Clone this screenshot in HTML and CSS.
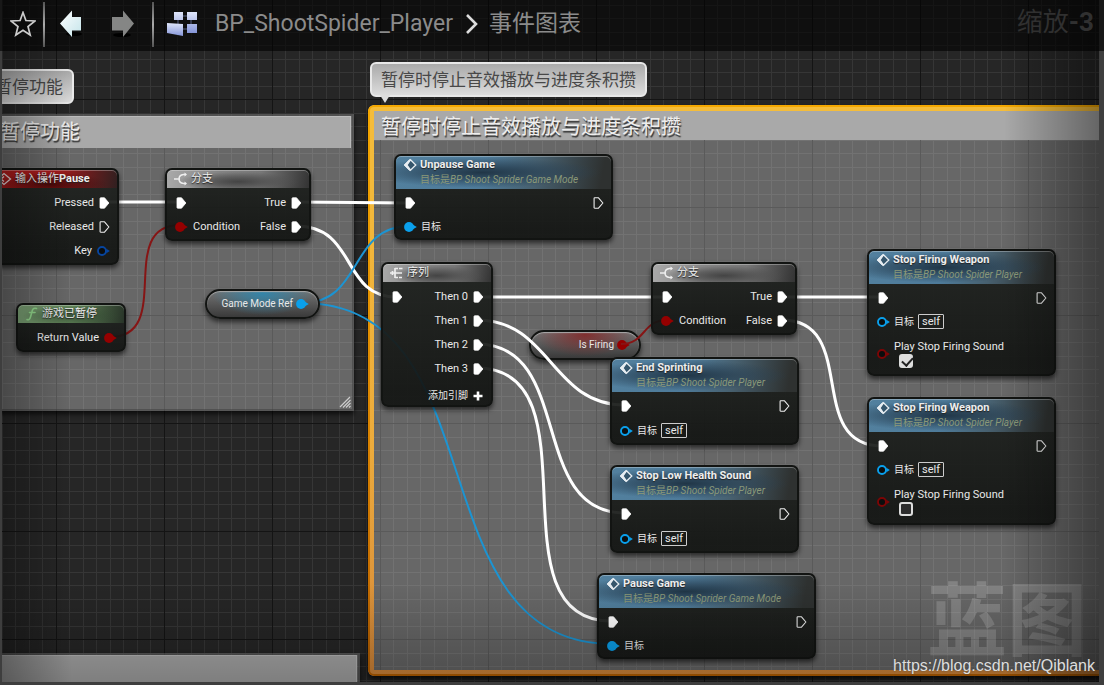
FILE: index.html
```html
<!DOCTYPE html>
<html lang="zh-CN">
<head>
<meta charset="utf-8">
<meta name="viewport" content="width=device-width, initial-scale=1">
<title>BP_ShootSpider_Player</title>
<link rel="stylesheet" href="styles.css">
</head>
<body>
<svg class="defs" aria-hidden="true">
  <defs>
    <pattern id="grid" x="56" y="99" width="108" height="108" patternUnits="userSpaceOnUse">
      <path class="grid-minor" d="M13.5 0V108M27.5 0V108M40.5 0V108M54.5 0V108M67.5 0V108M81.5 0V108M94.5 0V108M0 14.5H108M0 27.5H108M0 41.5H108M0 54.5H108M0 68.5H108M0 81.5H108M0 95.5H108"/>
      <path class="grid-major" d="M.5 0V108M0 .5H108"/>
    </pattern>
    <linearGradient id="ice" x1="0" y1="0" x2="1" y2="1"><stop offset="0" stop-color="#fff"/><stop offset="1" stop-color="#c4e4ea"/></linearGradient>
    <linearGradient id="tile" x1="0" y1="0" x2="0" y2="1"><stop offset="0" stop-color="#dfe6fa"/><stop offset="1" stop-color="#8595d8"/></linearGradient>
    <symbol id="exec-on" viewBox="0 0 10 12"><path d="M1.2.8H5L9.4 6 5 11.2H1.2Q.5 11.2.5 10.4V1.6Q.5.8 1.2.8Z" fill="#fff" stroke="#fff" stroke-width=".8" stroke-linejoin="round"/></symbol>
    <symbol id="exec-off" viewBox="0 0 10 12"><path d="M1.2.8H5L9.4 6 5 11.2H1.2Q.6 11.2.6 10.4V1.6Q.6.8 1.2.8Z" fill="none" stroke="#eee" stroke-width="1.1" stroke-linejoin="round"/></symbol>
    <symbol id="dot-on" viewBox="0 0 13 10"><circle cx="5" cy="5" r="4.9" fill="currentColor"/><path d="M9 2.8L12.8 5 9 7.2Z" fill="currentColor"/></symbol>
    <symbol id="dot-off" viewBox="0 0 13 10"><circle cx="5" cy="5" r="4" fill="#0b0d0d" stroke="currentColor" stroke-width="1.9"/><path d="M9.4 2.8L12.8 5 9.4 7.2Z" fill="currentColor"/></symbol>
    <symbol id="diamond" viewBox="0 0 14 14"><path d="M6.5 1.500L1 7l5.500 5.500 1-1.500L4.500 7l3-4Z" fill="#e8eef2" stroke="#e8eef2" stroke-width=".8"/><path d="M7.500 1.800L12.800 7 7.500 12.200 4 7Z" fill="#35566c" stroke="#e8eef2" stroke-width="1.300"/></symbol>
    <symbol id="event" viewBox="0 0 14 14"><path d="M2 5L6 1.500 12.500 7 6 12.500 2 9M6 4.500L3 7l3 2.500" fill="none" stroke="#e5dada" stroke-width="1.300"/></symbol>
    <symbol id="branch" viewBox="0 0 14 14"><path d="M0 7H6M12 2.500H9.500Q5 3 5 7T9.500 11.500H12" fill="none" stroke="#eee" stroke-width="1.500"/><path d="M10.500.5L13 2.500 10.500 4.500M10.500 9.500L13 11.500 10.500 13.500" fill="#eee"/></symbol>
    <symbol id="sequence" viewBox="0 0 14 14"><path d="M0 7H12M5 2V12M5 2.500H8M5 11.500H8M9 2.500H12.500M9 11.500H12M2.500 5V9" fill="none" stroke="#eee" stroke-width="1.700"/></symbol>
    <symbol id="func" viewBox="0 0 12 14"><path d="M1 12.500Q3.500 13.500 4.500 10L6.300 3.500Q7.200.5 10.500 1.500M3.500 5.500H9" fill="none" stroke="#93d98d" stroke-width="1.600" stroke-linecap="round"/></symbol>
    <symbol id="plus" viewBox="0 0 10 10"><path d="M5 .5V9.500M.5 5H9.500" stroke="#fff" stroke-width="2.600"/></symbol>
  </defs>
</svg>

<div class="editor">
  <header class="toolbar">
    <button class="tool star" type="button" aria-label="收藏"><svg viewBox="0 0 26 26"><path d="M13 1.500L15.900 9.500 25 10 18 15.500 20.200 24 13 19.300 5.800 24 8 15.500 1 10 10.100 9.500Z" fill="none" stroke="#ccc" stroke-width="1.700"/></svg></button>
    <span class="divider"></span>
    <button class="tool back" type="button" aria-label="后退"><svg viewBox="0 0 26 30"><ellipse cx="16" cy="25" rx="8" ry="2" fill="#000"/><path d="M2 14.500L14 1.500V8H23V21.500H14V28Z" fill="url(#ice)"/></svg></button>
    <button class="tool forward" type="button" aria-label="前进"><svg viewBox="0 0 26 30"><ellipse cx="12" cy="26" rx="9" ry="2" fill="#000"/><path d="M24 14.500L13 1.500V8H2V21.500H13V28Z" fill="#858685"/></svg></button>
    <span class="divider"></span>
    <nav class="crumbs">
      <svg class="graph-icon" viewBox="0 0 32 26"><path d="M12 5H24M12 5V20M25 5V18M14 18H24" stroke="#566083" fill="none"/><path d="M8 1H17V9H8ZM21 1H31V9H21ZM21 13H31V22H21Z" fill="url(#tile)"/><path d="M1 12L17 13V25L1 22Z" fill="url(#tile)"/></svg>
      <a class="crumb" href="#">BP_ShootSpider_Player</a>
      <svg class="chevron" viewBox="0 0 14 20"><path d="M2 1L11 10 2 19" fill="none" stroke="#ddd" stroke-width="2.600"/></svg>
      <span class="crumb">事件图表</span>
    </nav>
    <span class="zoom-level">缩放<b>-3</b></span>
  </header>

  <main class="canvas">
    <svg class="layer" aria-hidden="true"><rect width="100%" height="100%" fill="url(#grid)"/></svg>

    <section class="comment pause-comment"><h2 class="comment-title">暂停功能</h2>
      <svg class="grip" viewBox="0 0 12 12"><path d="M1 11L11 1M4 11.500L11.500 4M7 11.500L11.500 7M10 11.500L11.500 10" stroke="#ccc" stroke-width="1.200"/></svg>
    </section>
    <section class="comment lower-comment"><h2 class="comment-title"></h2></section>
    <section class="comment selected stop-comment"><h2 class="comment-title">暂停时停止音效播放与进度条积攒</h2></section>
    <div class="bubble pause-bubble">暂停功能</div>
    <div class="bubble tailed stop-bubble">暂停时停止音效播放与进度条积攒</div>
    <div class="graph-mark">蓝图</div>

    <article class="node pill red is-firing"><span class="pin out">Is Firing<svg class="dot c-red"><use href="#dot-on"/></svg></span></article>

    <svg class="layer wires" aria-hidden="true">
      <path d="M104 202H180M296 202L410 203M477 297H666M782 297H882"/>
      <path d="M296 226C358 226 340 297 397 297"/>
      <path d="M477 320C551 320 551 405 625 405"/>
      <path d="M477 344C575 344 527 513 625 513"/>
      <path d="M477 368C600 368 488 621 611 621"/>
      <path d="M782 320C860 320 804 446 882 446"/>
      <path class="data c-blue" d="M302 303C364 303 348 226 410 226M302 303C500 303 414 644 612 644"/>
      <path class="data c-wire-red" d="M110 337C175 337 115 225 180 225M621 344C646 344 642 320 667 320"/>
    </svg>

    <article class="node event input-pause">
      <header class="head"><svg class="glyph"><use href="#event"/></svg><h3>输入操作<b>Pause</b></h3></header>
      <div class="pins">
        <span class="pin out">Pressed<svg class="exec"><use href="#exec-on"/></svg></span>
        <span class="pin out">Released<svg class="exec"><use href="#exec-off"/></svg></span>
        <span class="pin out">Key<svg class="dot c-navy"><use href="#dot-off"/></svg></span>
      </div>
    </article>

    <article class="node flow branch-a">
      <header class="head"><svg class="glyph"><use href="#branch"/></svg><h3>分支</h3></header>
      <div class="pins two">
        <span class="pin"><svg class="exec"><use href="#exec-on"/></svg></span><span class="pin out">True<svg class="exec"><use href="#exec-on"/></svg></span>
        <span class="pin"><svg class="dot c-red"><use href="#dot-on"/></svg>Condition</span><span class="pin out">False<svg class="exec"><use href="#exec-on"/></svg></span>
      </div>
    </article>

    <article class="node pure is-paused">
      <header class="head"><svg class="glyph"><use href="#func"/></svg><h3>游戏已暂停</h3></header>
      <div class="pins"><span class="pin out">Return Value<svg class="dot c-red"><use href="#dot-on"/></svg></span></div>
    </article>

    <article class="node pill blue mode-ref"><span class="pin out">Game Mode Ref<svg class="dot c-blue"><use href="#dot-on"/></svg></span></article>

    <article class="node call unpause">
      <header class="head"><svg class="glyph"><use href="#diamond"/></svg><h3><b>Unpause Game</b></h3><p>目标是<i>BP Shoot Sprider Game Mode</i></p></header>
      <div class="pins two">
        <span class="pin"><svg class="exec"><use href="#exec-on"/></svg></span><span class="pin out"><svg class="exec"><use href="#exec-off"/></svg></span>
        <span class="pin"><svg class="dot c-blue"><use href="#dot-on"/></svg>目标</span>
      </div>
    </article>

    <article class="node flow sequence">
      <header class="head"><svg class="glyph"><use href="#sequence"/></svg><h3>序列</h3></header>
      <div class="pins two">
        <span class="pin"><svg class="exec"><use href="#exec-on"/></svg></span><span class="pin out">Then 0<svg class="exec"><use href="#exec-on"/></svg></span>
        <span class="pin out wide">Then 1<svg class="exec"><use href="#exec-on"/></svg></span>
        <span class="pin out wide">Then 2<svg class="exec"><use href="#exec-on"/></svg></span>
        <span class="pin out wide">Then 3<svg class="exec"><use href="#exec-on"/></svg></span>
        <button class="add-pin wide" type="button">添加引脚<svg><use href="#plus"/></svg></button>
      </div>
    </article>

    <article class="node flow branch-b">
      <header class="head"><svg class="glyph"><use href="#branch"/></svg><h3>分支</h3></header>
      <div class="pins two">
        <span class="pin"><svg class="exec"><use href="#exec-on"/></svg></span><span class="pin out">True<svg class="exec"><use href="#exec-on"/></svg></span>
        <span class="pin"><svg class="dot c-red"><use href="#dot-on"/></svg>Condition</span><span class="pin out">False<svg class="exec"><use href="#exec-on"/></svg></span>
      </div>
    </article>

    <article class="node call end-sprint">
      <header class="head"><svg class="glyph"><use href="#diamond"/></svg><h3><b>End Sprinting</b></h3><p>目标是<i>BP Shoot Spider Player</i></p></header>
      <div class="pins two roomy">
        <span class="pin"><svg class="exec"><use href="#exec-on"/></svg></span><span class="pin out"><svg class="exec"><use href="#exec-off"/></svg></span>
        <span class="pin"><svg class="dot c-blue"><use href="#dot-off"/></svg>目标<span class="self">self</span></span>
      </div>
    </article>

    <article class="node call stop-low">
      <header class="head"><svg class="glyph"><use href="#diamond"/></svg><h3><b>Stop Low Health Sound</b></h3><p>目标是<i>BP Shoot Spider Player</i></p></header>
      <div class="pins two roomy">
        <span class="pin"><svg class="exec"><use href="#exec-on"/></svg></span><span class="pin out"><svg class="exec"><use href="#exec-off"/></svg></span>
        <span class="pin"><svg class="dot c-blue"><use href="#dot-off"/></svg>目标<span class="self">self</span></span>
      </div>
    </article>

    <article class="node call pause-game">
      <header class="head"><svg class="glyph"><use href="#diamond"/></svg><h3><b>Pause Game</b></h3><p>目标是<i>BP Shoot Sprider Game Mode</i></p></header>
      <div class="pins two">
        <span class="pin"><svg class="exec"><use href="#exec-on"/></svg></span><span class="pin out"><svg class="exec"><use href="#exec-off"/></svg></span>
        <span class="pin"><svg class="dot c-blue"><use href="#dot-on"/></svg>目标</span>
      </div>
    </article>

    <article class="node call stop-fire-a">
      <header class="head"><svg class="glyph"><use href="#diamond"/></svg><h3><b>Stop Firing Weapon</b></h3><p>目标是<i>BP Shoot Spider Player</i></p></header>
      <div class="pins two">
        <span class="pin"><svg class="exec"><use href="#exec-on"/></svg></span><span class="pin out"><svg class="exec"><use href="#exec-off"/></svg></span>
        <span class="pin wide"><svg class="dot c-blue"><use href="#dot-off"/></svg>目标<span class="self">self</span></span>
        <span class="pin wide tall"><svg class="dot c-dark-red"><use href="#dot-off"/></svg><label class="option">Play Stop Firing Sound<input type="checkbox" checked></label></span>
      </div>
    </article>

    <article class="node call stop-fire-b">
      <header class="head"><svg class="glyph"><use href="#diamond"/></svg><h3><b>Stop Firing Weapon</b></h3><p>目标是<i>BP Shoot Spider Player</i></p></header>
      <div class="pins two">
        <span class="pin"><svg class="exec"><use href="#exec-on"/></svg></span><span class="pin out"><svg class="exec"><use href="#exec-off"/></svg></span>
        <span class="pin wide"><svg class="dot c-blue"><use href="#dot-off"/></svg>目标<span class="self">self</span></span>
        <span class="pin wide tall"><svg class="dot c-dark-red"><use href="#dot-off"/></svg><label class="option">Play Stop Firing Sound<input type="checkbox"></label></span>
      </div>
    </article>

    <div class="shade"></div>
  </main>
  <div class="credit">https://blog.csdn.net/Qiblank</div>
</div>
</body>
</html>
```
FILE: styles.css
```css
* { box-sizing: border-box; }
body {
  margin: 0;
  background: #1c1c1c;
  color: #e6e6e6;
  font: 11px/14px Roboto, "Noto Sans CJK SC", sans-serif;
}
h2, h3, p { margin: 0; font-weight: 400; }
button { border: 0; padding: 0; background: none; color: inherit; font: inherit; }
svg { display: block; flex: none; }
.defs { position: absolute; width: 0; height: 0; }
.grid-minor { stroke: #363636; fill: none; }
.grid-major { stroke: #141414; fill: none; }

.editor { position: relative; min-height: 100vh; overflow: hidden; }

/* Toolbar */
.toolbar {
  position: relative;
  z-index: 2;
  display: flex;
  align-items: center;
  height: 51px;
  padding: 0 10px 3px;
  background: rgba(0, 0, 0, .6);
}
.tool svg { width: 26px; height: 30px; }
.star svg { height: 26px; }
.divider { width: 2px; height: 45px; margin: 0 13px 0 7px; background: linear-gradient(#555, #aaa, #555); }
.forward { margin: 0 16px 0 26px; }
.forward + .divider { margin: 0 12px 0 0; }
.crumbs { display: flex; align-items: center; }
.graph-icon { width: 32px; height: 26px; margin-right: 17px; }
.crumb { color: #8b8b8b; font-size: 23px; line-height: 32px; text-decoration: none; }
.chevron { width: 14px; height: 20px; margin: 0 10px 0 12px; }
.zoom-level { margin: 0 0 4px auto; color: #303030; font-size: 26px; line-height: 32px; }

/* Graph canvas */
.canvas {
  position: absolute;
  inset: 0;
  overflow: hidden;
  background: #262626;
}
.layer { position: absolute; inset: 0; width: 100%; height: 100%; }
.wires { fill: none; stroke: #fff; stroke-width: 3; }
.wires .data { stroke: currentColor; stroke-width: 2; }
.c-red { color: #950000; }
.c-dark-red { color: #7c0505; }
.c-wire-red { color: #861515; }
.c-blue { color: #0aa0ec; }
.wires .c-blue { color: #1c94d2; }
.c-navy { color: #07459f; }
.shade {
  position: absolute;
  inset: 0 5px 3px 2px;
  pointer-events: none;
  background:
    linear-gradient(to right, rgba(0, 0, 0, .3), transparent 70px),
    linear-gradient(to left, rgba(0, 0, 0, .4), transparent 95px),
    linear-gradient(to top, rgba(0, 0, 0, .25), transparent 100px);
  outline: 5px solid #3e3e3e;
}

/* Comment boxes */
.comment {
  position: absolute;
  padding: 2px 3px 3px;
  background: rgba(255, 255, 255, .3);
  box-shadow: inset 0 0 0 2px rgba(60, 60, 60, .5), 0 3px 5px rgba(0, 0, 0, .7);
}
.comment-title {
  min-height: 31px;
  padding-left: 1px;
  border: 1px solid #bbb;
  border-width: 1px 1px 0 0;
  background: #a9a9a9;
  color: #eee;
  font-size: 20px;
  line-height: 31px;
  text-shadow: 1px 2px 1px #333;
}
.pause-comment { left: -4px; top: 114px; width: 358px; height: 297px; }
.lower-comment { left: -4px; top: 653px; width: 364px; height: 60px; }
.stop-comment { left: 368px; right: -20px; top: 105px; bottom: 9px; }
.comment.selected { padding: 5px; border-radius: 6px; box-shadow: 0 3px 5px rgba(0, 0, 0, .7); }
.selected .comment-title { min-height: 29px; padding-left: 8px; line-height: 32px; height: 30px; }
.selected::before, .selected::after {
  content: "";
  position: absolute;
  inset: 0;
  padding: 6px;
  border-radius: 6px;
  background: linear-gradient(#f5bd3a, #ecab3c 60%, #d4873a);
  mask: linear-gradient(#000 0 0) content-box exclude, linear-gradient(#000 0 0);
}
.selected::after { padding: 2px; background: linear-gradient(#f5a800, #d98200 60%, #b96000); }
.grip { position: absolute; right: 3px; bottom: 3px; width: 12px; height: 12px; }
.bubble {
  position: absolute;
  height: 35px;
  padding: 0 9px;
  border: 2px solid #e8e8e8;
  border-radius: 6px;
  background: linear-gradient(#aaa, #dcdcdc);
  color: #484848;
  font-size: 17px;
  line-height: 32px;
  white-space: nowrap;
}
.pause-bubble { left: -16px; top: 69px; }
.stop-bubble { left: 370px; top: 62px; }
.tailed::after {
  content: "";
  position: absolute;
  left: 8px;
  top: 100%;
  border: 5px solid transparent;
  border-top: 8px solid #ddd;
}
.graph-mark {
  position: absolute;
  right: 17px;
  bottom: 23px;
  color: rgba(255, 255, 255, .18);
  font-size: 80px;
  line-height: 80px;
  font-weight: 700;
}
.credit {
  position: absolute;
  z-index: 3;
  right: 9px;
  bottom: 10px;
  color: #ddd;
  font: 16px/18px "Liberation Sans", sans-serif;
  text-shadow: 0 0 2px #444;
}

/* Nodes */
.node {
  position: absolute;
  border: 2px solid #121412;
  border-radius: 7px;
  background: linear-gradient(rgba(32, 35, 32, .94), rgba(18, 20, 18, .92) 90%);
  box-shadow: 0 3px 5px rgba(0, 0, 0, .6);
}
.head {
  display: grid;
  grid-template-columns: 14px 1fr;
  column-gap: 3px;
  align-items: center;
  padding: 2px 7px;
  border-radius: 5px 5px 0 0;
  box-shadow: inset 0 1px rgba(255, 255, 255, .3);
}
.head h3 { font-size: 11px; line-height: 14px; color: #eee; text-shadow: 0 1px 1px #222; white-space: nowrap; }
.head p { grid-column: 2; font-size: 10px; line-height: 15px; color: #8a9878; white-space: nowrap; }
.glyph { width: 14px; height: 14px; }
.flow .head { background: radial-gradient(ellipse at 50% 65%, #444 0, rgba(80, 80, 80, .7) 30%, transparent 60%), linear-gradient(100deg, #aaa, #858585 35%, #777 65%, #333); }
.event .head { background: radial-gradient(ellipse at 45% 80%, rgba(50, 5, 5, .8), transparent 60%), linear-gradient(100deg, #b01c1c, #a31a1c 50%, #302020); }
.pure .head { background: radial-gradient(ellipse at 50% 60%, rgba(50, 75, 50, .8), transparent 65%), linear-gradient(100deg, #7ca276, #618458 50%, #283428); }
.call .head { background: radial-gradient(ellipse at 40% 50%, rgba(30, 50, 66, .95) 0, rgba(40, 65, 85, .6) 35%, transparent 65%), linear-gradient(100deg, #52809e, #4e7b9a 40%, #47606f 65%, #2e3130 95%); }
.pins { padding: 3px 8px 0; }
.two { display: grid; grid-template-columns: auto 1fr; }
.wide { grid-column: 1 / -1; }
.pin { display: flex; align-items: center; gap: 5px; height: 24px; white-space: nowrap; color: #e8e8e8; }
.pin { font-size: 11px; }
.out { justify-content: flex-end; }
.exec { width: 11px; height: 12px; }
.out .exec { margin: 0; }
.pins .exec { margin-left: 1px; }
.pins .out .exec { margin: 0 -1px 0 0; }
.dot { width: 13px; height: 10px; }
.out .dot { margin: 0 -1px 0 0; }
.call .pins { padding-top: 2px; row-gap: 1px; }
.call .pin { height: 23px; font-size: 10px; gap: 4px; }
.call .roomy { row-gap: 2px; padding-bottom: 1px; }
.self { padding: 0 3px; border: 1px solid #ccc; border-radius: 1px; font-size: 11px; line-height: 13px; }
.call .tall { height: 40px; }
.option { display: flex; flex-direction: column; font-size: 11px; }
.option input {
  appearance: none;
  width: 14px;
  height: 14px;
  margin: 0 0 0 5px;
  border: 2px solid #ddd;
  border-radius: 3px;
  background: #2d2d2d;
}
.option input:checked { background: #ddd; position: relative; }
.option input:checked::after {
  content: "";
  position: absolute;
  left: 3px;
  top: -1px;
  width: 5px;
  height: 9px;
  border: solid #222;
  border-width: 0 2px 2px 0;
  transform: rotate(42deg);
}
.add-pin {
  display: flex;
  align-items: center;
  justify-content: flex-end;
  gap: 5px;
  height: 18px;
  margin-top: 6px;
  font-size: 10px;
}
.add-pin svg { width: 10px; height: 10px; }
.pill { border-radius: 15px; background: linear-gradient(rgba(115, 115, 115, .9), rgba(62, 62, 62, .8) 60%, rgba(45, 45, 45, .85)); box-shadow: inset 0 1px 1px #aaa, 0 3px 5px rgba(0, 0, 0, .6); }
.pill.blue { background: radial-gradient(ellipse at 50% 10%, rgba(45, 135, 175, .9), transparent 65%), linear-gradient(#737373, #3a3a3a); }
.pill.red { background: radial-gradient(ellipse at 50% 10%, rgba(130, 40, 40, .9), transparent 65%), linear-gradient(#737373, #3a3a3a); }
.pill .pin { height: 26px; padding-right: 9px; gap: 3px; font-size: 10px; }
.pill .pin .dot { margin: 0; }

/* Node places on the graph */
.input-pause { left: -6px; top: 168px; width: 125px; min-height: 94px; }
.input-pause .head { padding-left: 2px; }
.branch-a { left: 165px; top: 168px; width: 146px; min-height: 72px; }
.is-paused { left: 16px; top: 303px; width: 110px; min-height: 47px; }
.mode-ref { left: 205px; top: 289px; width: 115px; min-height: 29px; }
.unpause { left: 394px; top: 154px; width: 219px; min-height: 85px; }
.sequence { left: 381px; top: 262px; width: 112px; min-height: 145px; }
.branch-b { left: 651px; top: 262px; width: 146px; min-height: 73px; }
.is-firing { left: 529px; top: 330px; width: 112px; min-height: 29px; }
.end-sprint { left: 610px; top: 357px; width: 189px; min-height: 88px; }
.stop-low { left: 610px; top: 465px; width: 189px; min-height: 88px; }
.pause-game { left: 597px; top: 573px; width: 219px; min-height: 85px; }
.stop-fire-a { left: 867px; top: 249px; width: 189px; min-height: 127px; }
.stop-fire-b { left: 867px; top: 397px; width: 189px; min-height: 128px; }
```
